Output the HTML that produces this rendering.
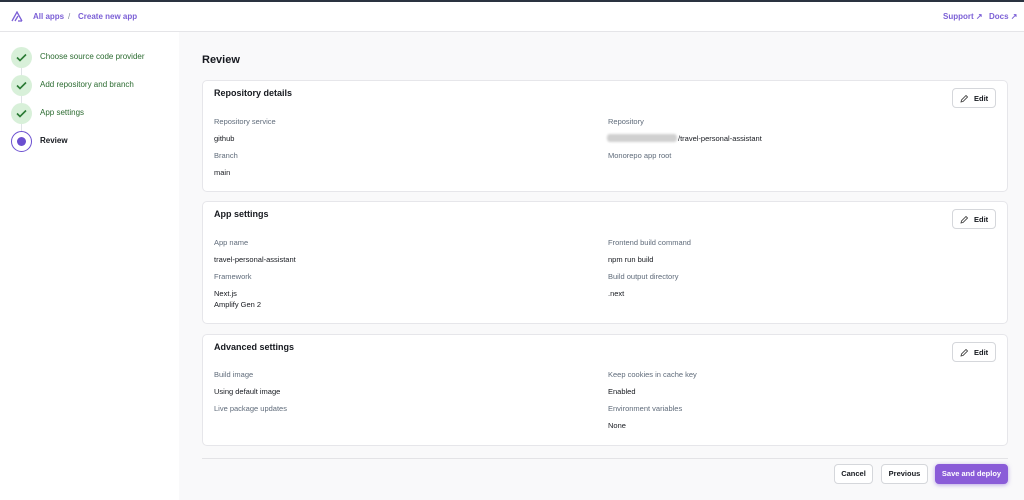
<!DOCTYPE html>
<html><head><style>
*{box-sizing:border-box;margin:0;padding:0}
body{width:1024px;height:500px;overflow:hidden;font-family:"Liberation Sans",sans-serif;background:#f9f9fa;color:#16191f;position:relative}
.top{position:absolute;left:0;top:0;width:1024px;height:2px;background:#2a3340}
.hdr{position:absolute;left:0;top:2px;width:1024px;height:30px;background:#fff;border-bottom:1px solid #e5e5e8}
.hdr a{position:absolute;top:10px;font-size:8px;font-weight:bold;color:#7b5fd6}
.side{position:absolute;left:0;top:32px;width:179px;height:468px;background:#fff}
.step{position:absolute;left:11px;width:21px;height:21px;border-radius:50%;background:#d8f0d9}
.step svg{position:absolute;left:5px;top:6px}
.sl{position:absolute;left:40px;font-size:8px;color:#2b6b30}
.line{position:absolute;left:21px;width:1px;background:#dfe3e6}
.card{position:absolute;left:202px;width:806px;background:#fff;border:1px solid #e6e6ea;border-radius:5px}
.card h3{position:absolute;left:11px;top:7px;font-size:9px;font-weight:bold}
.edit{position:absolute;right:11px;top:7px;width:44px;height:20px;border:1px solid #d5d7db;border-radius:4px;font-size:7.5px;font-weight:bold;padding:5px 0 0 21px}
.edit svg{position:absolute;left:7px;top:6px}
.lb{position:absolute;font-size:7.5px;color:#5f6b7a}
.vl{position:absolute;font-size:7.5px;color:#16191f}
.btn{position:absolute;top:464px;height:20px;border:1px solid #d5d7db;border-radius:4px;background:#fff;font-size:7.5px;font-weight:bold;text-align:center;line-height:18px}
</style></head><body>
<div class="top"></div>
<div class="hdr">
<svg style="position:absolute;left:11px;top:9px" width="12" height="11" viewBox="0 0 12 11"><path d="M1 10L6 1L11 10M4 10L7 5" stroke="#7b5fd6" stroke-width="1.3" fill="none"/><path d="M7 10H11" stroke="#7b5fd6" stroke-width="1.3"/></svg>
<a style="left:33px">All apps</a><a style="left:68px;color:#7f8a96;font-weight:normal">/</a><a style="left:78px">Create new app</a>
<a style="left:943px">Support ↗</a><a style="left:989px">Docs ↗</a>
</div>
<div class="side">
<div class="line" style="top:30px;height:80px"></div>
<div class="step" style="top:15px"><svg width="11" height="9"><path d="M1 4.5L4 7.5L10 1.5" stroke="#2b7a34" stroke-width="1.6" fill="none"/></svg></div>
<div class="sl" style="top:20px">Choose source code provider</div>
<div class="step" style="top:43px"><svg width="11" height="9"><path d="M1 4.5L4 7.5L10 1.5" stroke="#2b7a34" stroke-width="1.6" fill="none"/></svg></div>
<div class="sl" style="top:48px">Add repository and branch</div>
<div class="step" style="top:71px"><svg width="11" height="9"><path d="M1 4.5L4 7.5L10 1.5" stroke="#2b7a34" stroke-width="1.6" fill="none"/></svg></div>
<div class="sl" style="top:76px">App settings</div>
<div class="step" style="top:99px;background:#fff;border:1px solid #6b4fd0"><div style="position:absolute;left:5px;top:5px;width:9px;height:9px;border-radius:50%;background:#6b4fd0"></div></div>
<div class="sl" style="top:104px;color:#16191f;font-weight:bold">Review</div>
</div>
<div style="position:absolute;left:202px;top:54px;font-size:11px;font-weight:bold">Review</div>

<div class="card" style="top:80px;height:112px"><h3>Repository details</h3>
<div class="edit"><svg width="8" height="8"><path d="M1 7L1.5 5L6 0.5L7.5 2L3 6.5Z" stroke="#333" stroke-width="0.8" fill="none"/></svg>Edit</div>
<div class="lb" style="left:11px;top:36px">Repository service</div><div class="vl" style="left:11px;top:53px">github</div>
<div class="lb" style="left:11px;top:70px">Branch</div><div class="vl" style="left:11px;top:87px">main</div>
<div class="lb" style="left:405px;top:36px">Repository</div>
<div style="position:absolute;left:404px;top:53px;width:70px;height:8px;background:#d0d0d0;border-radius:3px;filter:blur(1px)"></div>
<div class="vl" style="left:475px;top:53px">/travel-personal-assistant</div>
<div class="lb" style="left:405px;top:70px">Monorepo app root</div>
</div>

<div class="card" style="top:201px;height:123px"><h3>App settings</h3>
<div class="edit"><svg width="8" height="8"><path d="M1 7L1.5 5L6 0.5L7.5 2L3 6.5Z" stroke="#333" stroke-width="0.8" fill="none"/></svg>Edit</div>
<div class="lb" style="left:11px;top:36px">App name</div><div class="vl" style="left:11px;top:53px">travel-personal-assistant</div>
<div class="lb" style="left:11px;top:70px">Framework</div><div class="vl" style="left:11px;top:87px">Next.js</div><div class="vl" style="left:11px;top:98px">Amplify Gen 2</div>
<div class="lb" style="left:405px;top:36px">Frontend build command</div><div class="vl" style="left:405px;top:53px">npm run build</div>
<div class="lb" style="left:405px;top:70px">Build output directory</div><div class="vl" style="left:405px;top:87px">.next</div>
</div>

<div class="card" style="top:334px;height:112px"><h3>Advanced settings</h3>
<div class="edit"><svg width="8" height="8"><path d="M1 7L1.5 5L6 0.5L7.5 2L3 6.5Z" stroke="#333" stroke-width="0.8" fill="none"/></svg>Edit</div>
<div class="lb" style="left:11px;top:35px">Build image</div><div class="vl" style="left:11px;top:52px">Using default image</div>
<div class="lb" style="left:11px;top:69px">Live package updates</div>
<div class="lb" style="left:405px;top:35px">Keep cookies in cache key</div><div class="vl" style="left:405px;top:52px">Enabled</div>
<div class="lb" style="left:405px;top:69px">Environment variables</div><div class="vl" style="left:405px;top:86px">None</div>
</div>

<div style="position:absolute;left:202px;top:458px;width:806px;height:1px;background:#e3e3e6"></div>
<div class="btn" style="left:834px;width:39px">Cancel</div>
<div class="btn" style="left:881px;width:47px">Previous</div>
<div class="btn" style="left:935px;width:73px;background:#8a5cd8;border-color:#8a5cd8;color:#fff;box-shadow:0 1px 4px rgba(120,80,210,.5)">Save and deploy</div>
</body></html>
